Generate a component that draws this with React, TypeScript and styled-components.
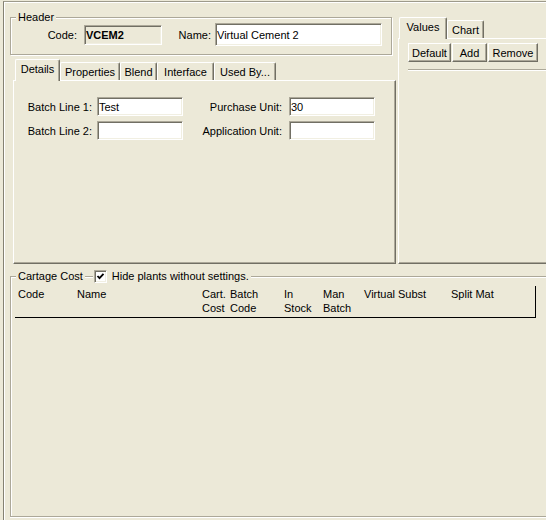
import React from 'react';
import styled, { createGlobalStyle } from 'styled-components';

const GlobalStyle = createGlobalStyle`
  html, body {
    margin: 0;
    padding: 0;
    overflow: hidden;
    background: #ece9d8;
  }
  body {
    font-family: "Liberation Sans", Arial, sans-serif;
    font-size: 11px;
    color: #000;
  }
`;

const Window = styled.div`
  width: 546px;
  height: 520px;
  overflow: hidden;
  background: #ece9d8;
  padding: 1px 0 0 3px;
  box-sizing: border-box;
`;

const Frame = styled.div`
  height: 519px;
  border-top: 1px solid #9d9a8b;
  border-left: 1px solid #858273;
  box-shadow: inset 1px 1px 0 #fff;
  box-sizing: border-box;
`;

const TopRow = styled.div`
  display: flex;
  height: 262px;
`;

const LeftCol = styled.div`
  width: 392px;
  flex: none;
  display: flex;
  flex-direction: column;
`;

const RightCol = styled.div`
  flex: 1;
  min-width: 0;
  margin-left: 2px;
  padding-top: 15px;
  display: flex;
  flex-direction: column;
`;

// $open: the box runs on past the window's right edge, so no right border shows
const GroupBox = styled.fieldset<{ $w?: number; $h: number; $top: number; $open?: boolean }>`
  margin: ${p => p.$top}px 0 0 6px;
  padding: 0;
  width: ${p => (p.$w ? `${p.$w}px` : 'calc(100% - 6px)')};
  height: ${p => p.$h}px;
  box-sizing: border-box;
  border: 1px solid #aca899;
  border-right: ${p => (p.$open ? 'none' : '1px solid #aca899')};
  box-shadow: ${p =>
    p.$open ? 'inset 1px 1px 0 #fff, 0 1px 0 #fff' : 'inset 1px 1px 0 #fff, 1px 1px 0 #fff'};
  min-width: 0;
`;

const Legend = styled.legend`
  margin-left: 5px;
  padding: 0 2px;
  line-height: 13px;
  height: 13px;
  background: #ece9d8;
  display: flex;
  align-items: center;
`;

const HeaderRow = styled.div`
  display: flex;
  align-items: center;
  height: 23px;
  margin-top: -1px;
`;

const Label = styled.span<{ $w: number; $ml: number }>`
  width: ${p => p.$w}px;
  margin-left: ${p => p.$ml}px;
  text-align: right;
  white-space: nowrap;
  flex: none;
`;

const Field = styled.input<{ $w: number; $h: number; $ml?: number; $readonlyBg?: boolean; $bold?: boolean }>`
  width: ${p => p.$w}px;
  height: ${p => p.$h}px;
  margin: 0 0 0 ${p => p.$ml ?? 0}px;
  padding: 0 0 0 1px;
  box-sizing: border-box;
  font: inherit;
  font-weight: ${p => (p.$bold ? 'bold' : 'normal')};
  color: #000;
  background: ${p => (p.$readonlyBg ? '#ece9d8' : '#fff')};
  border: 1px solid;
  border-color: #aca899 #fff #fff #aca899;
  box-shadow: inset 1px 1px 0 #716f64, inset -1px -1px 0 #f1efe2;
  outline: none;
  flex: none;
`;

const TabStrip = styled.div<{ $ml: number; $mt: number; $h: number }>`
  display: flex;
  align-items: flex-end;
  height: ${p => p.$h}px;
  margin: ${p => p.$mt}px 0 0 ${p => p.$ml}px;
`;

const Tab = styled.div<{ $w: number; $active?: boolean }>`
  width: ${p => p.$w}px;
  height: ${p => (p.$active ? 22 : 18)}px;
  margin-bottom: ${p => (p.$active ? -1 : 0)}px;
  padding-bottom: ${p => (p.$active ? 3 : 0)}px;
  position: relative;
  z-index: ${p => (p.$active ? 1 : 0)};
  box-sizing: border-box;
  background: #ece9d8;
  border-top: 1px solid #fff;
  border-left: 1px solid #fff;
  border-right: 1px solid #716f64;
  box-shadow: inset -1px 0 0 #aca899;
  border-radius: 2px 2px 0 0;
  display: flex;
  align-items: center;
  justify-content: center;
  white-space: nowrap;
  flex: none;
`;

const Panel = styled.div<{ $h: number; $ml: number; $w?: number; $open?: boolean }>`
  height: ${p => p.$h}px;
  margin-left: ${p => p.$ml}px;
  width: ${p => (p.$w ? `${p.$w}px` : 'auto')};
  box-sizing: border-box;
  border: 1px solid;
  border-color: #fff #716f64 #716f64 #fff;
  border-right: ${p => (p.$open ? 'none' : '1px solid #716f64')};
  box-shadow: ${p => (p.$open ? 'inset 0 -1px 0 #aca899' : 'inset -1px -1px 0 #aca899')};
`;

const FormGrid = styled.div`
  display: grid;
  grid-template-columns: 83px 86px 106px 86px;
  grid-auto-rows: 19px;
  row-gap: 5px;
  padding-top: 16px;
  align-items: center;
`;

const GridLabel = styled.span<{ $pr: number }>`
  text-align: right;
  padding-right: ${p => p.$pr}px;
  white-space: nowrap;
`;

const ButtonRow = styled.div`
  display: flex;
  gap: 1px;
  padding: 4px 0 0 9px;
`;

const Button = styled.button<{ $w: number }>`
  width: ${p => p.$w}px;
  height: 19px;
  padding: 0;
  font: inherit;
  color: #000;
  background: #ece9d8;
  box-sizing: border-box;
  border: 1px solid;
  border-color: #fff #716f64 #716f64 #fff;
  box-shadow: inset -1px -1px 0 #aca899;
`;

const Etched = styled.div`
  height: 0;
  border-top: 1px solid #aca899;
  border-bottom: 1px solid #fff;
  margin: 7px 0 0 9px;
`;

const Dash = styled(Etched)`
  margin: 6px 1px 0 2px;
  align-self: flex-start;
  width: 8px;
`;

const CheckBox = styled.span`
  width: 13px;
  height: 13px;
  box-sizing: border-box;
  background: #fff;
  border: 1px solid;
  border-color: #aca899 #fff #fff #aca899;
  box-shadow: inset 1px 1px 0 #716f64, inset -1px -1px 0 #f1efe2;
  display: flex;
  align-items: center;
  justify-content: center;
  flex: none;
`;

const CheckText = styled.span`
  margin-left: 5px;
  white-space: nowrap;
`;

const ListHeader = styled.div`
  margin: 3px 0 0 4px;
  width: 521px;
  height: 32px;
  box-sizing: border-box;
  border-right: 1px solid #000;
  border-bottom: 1px solid #000;
  display: grid;
  grid-template-columns: 59px 125px 28px 54px 39px 41px 87px 1fr;
  padding: 1px 0 0 3px;
  line-height: 14px;
`;

const Column = styled.div`
  white-space: pre-line;
`;

const leftTabs = [
  { name: 'Details', w: 45, active: true },
  { name: 'Properties', w: 60 },
  { name: 'Blend', w: 37 },
  { name: 'Interface', w: 57 },
  { name: 'Used By...', w: 62 },
];

const columns = ['Code', 'Name', 'Cart.\nCost', 'Batch\nCode', 'In\nStock', 'Man\nBatch', 'Virtual Subst', 'Split Mat'];

export default function App() {
  return (
    <>
      <GlobalStyle />
      <Window>
        <Frame>
          <TopRow>
            <LeftCol>
              <GroupBox $w={382} $h={44} $top={9}>
                <Legend>Header</Legend>
                <HeaderRow>
                  <Label $w={30} $ml={36}>Code:</Label>
                  <Field $w={78} $h={20} $ml={7} $readonlyBg $bold readOnly value="VCEM2" />
                  <Label $w={33} $ml={16}>Name:</Label>
                  <Field $w={167} $h={23} $ml={4} readOnly value="Virtual Cement 2" />
                </HeaderRow>
              </GroupBox>

              <TabStrip $ml={11} $mt={5} $h={20}>
                {leftTabs.map(t => (
                  <Tab key={t.name} $w={t.w} $active={t.active}>{t.name}</Tab>
                ))}
              </TabStrip>
              <Panel $h={184} $ml={9} $w={383}>
                <FormGrid>
                  <GridLabel $pr={5}>Batch Line 1:</GridLabel>
                  <Field $w={86} $h={19} readOnly value="Test" />
                  <GridLabel $pr={7}>Purchase Unit:</GridLabel>
                  <Field $w={86} $h={19} readOnly value="30" />
                  <GridLabel $pr={5}>Batch Line 2:</GridLabel>
                  <Field $w={86} $h={19} readOnly value="" />
                  <GridLabel $pr={7}>Application Unit:</GridLabel>
                  <Field $w={86} $h={19} readOnly value="" />
                </FormGrid>
              </Panel>
            </LeftCol>

            <RightCol>
              <TabStrip $ml={1} $mt={0} $h={21}>
                <Tab $w={48} $active>Values</Tab>
                <Tab $w={37}>Chart</Tab>
              </TabStrip>
              <Panel $h={226} $ml={0} $open>
                <ButtonRow>
                  <Button $w={43}>Default</Button>
                  <Button $w={35}>Add</Button>
                  <Button $w={50}>Remove</Button>
                </ButtonRow>
                <Etched />
              </Panel>
            </RightCol>
          </TopRow>

          <GroupBox $h={247} $top={6} $open>
            <Legend>
              Cartage Cost
              <Dash />
              <CheckBox>
                <svg width="9" height="9" viewBox="0 0 9 9">
                  <polyline points="1.5,4 3.5,6.2 7.5,1.8" fill="none" stroke="#000" strokeWidth="1.8" />
                </svg>
              </CheckBox>
              <CheckText>Hide plants without settings.</CheckText>
            </Legend>
            <ListHeader>
              {columns.map(c => (
                <Column key={c}>{c}</Column>
              ))}
            </ListHeader>
          </GroupBox>
        </Frame>
      </Window>
    </>
  );
}
